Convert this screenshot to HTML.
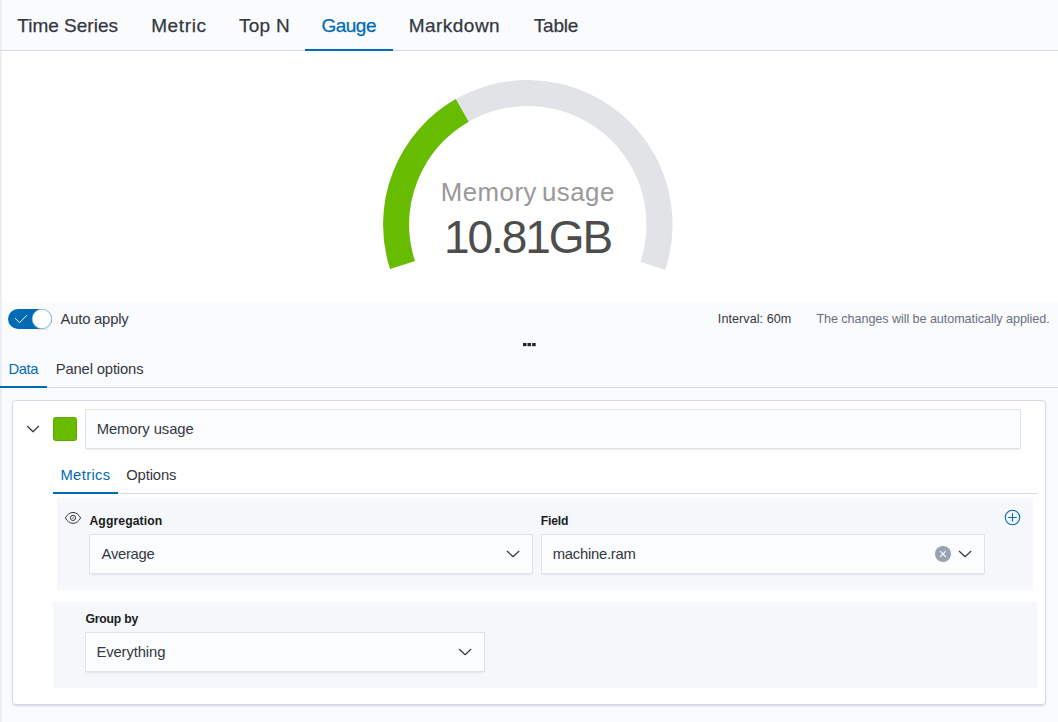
<!DOCTYPE html>
<html lang="en"><head><meta charset="utf-8"><title>Gauge</title>
<style>
html,body{margin:0;padding:0}
body{width:1058px;height:722px;position:relative;overflow:hidden;background:#fafbfd;font-family:"Liberation Sans",sans-serif;-webkit-font-smoothing:auto}
.abs{position:absolute}
.t{position:absolute;white-space:nowrap;line-height:1}
#lb{left:0;top:0;width:1px;height:722px;background:#e8ebf0;box-shadow:1px 0 0 rgba(200,207,222,.22)}
#tabline{left:0;top:50px;width:1058px;height:1px;background:#d3dae6}
#tabsel{left:305px;top:49px;width:88px;height:2px;background:#006bb4}
#viz{left:1px;top:51px;width:1057px;height:250px;background:#fff}
#sw{left:8px;top:309px;width:44px;height:20px;border-radius:10px;background:#006bb4}
#tab2line{left:1px;top:387px;width:1057px;height:1px;background:#d3dae6}
#tab2sel{left:0;top:386px;width:47px;height:2px;background:#006bb4}
#panel{left:12px;top:400px;width:1032px;height:303px;background:#fff;border:1px solid #d3dae6;border-radius:4px;box-shadow:0 2px 2px -1px rgba(152,162,179,.3),0 1px 5px -2px rgba(152,162,179,.3)}
#sq{left:53px;top:417px;width:22px;height:22px;background:#68bc00;border:1px solid #5ca700;border-radius:2.5px}
.inp{position:absolute;background:#fbfcfd;box-sizing:border-box;box-shadow:0 1px 1px -1px rgba(152,162,179,.2),0 3px 2px -2px rgba(152,162,179,.2),inset 0 0 0 1px rgba(35,38,55,.115)}
#in1{left:85px;top:409px;width:936px;height:40px}
#tab3line{left:53px;top:493px;width:984px;height:1px;background:#d3dae6}
#tab3sel{left:53px;top:492px;width:65px;height:2px;background:#006bb4}
#row1{left:57px;top:498px;width:976px;height:92px;background:#f5f7fa}
#row2{left:53px;top:602px;width:984px;height:86px;background:#f5f7fa}
#in2{left:89px;top:534px;width:444px;height:40px}
#in3{left:541px;top:534px;width:444px;height:40px}
#in4{left:85px;top:632px;width:400px;height:40px}
svg{position:absolute;left:0;top:0;overflow:visible}
#t1{left:17.25px;top:16px;font-size:19px;font-weight:400;color:#343741;letter-spacing:0.011px;-webkit-text-stroke:0.25px #343741}
#t2{left:151.17px;top:16px;font-size:19px;font-weight:400;color:#343741;letter-spacing:0.638px;-webkit-text-stroke:0.25px #343741}
#t3{left:239.02px;top:16px;font-size:19px;font-weight:400;color:#343741;letter-spacing:0.244px;-webkit-text-stroke:0.25px #343741}
#t4{left:321.59px;top:16px;font-size:19px;font-weight:400;color:#006bb4;letter-spacing:-0.542px;-webkit-text-stroke:0.25px #006bb4}
#t5{left:408.66px;top:16px;font-size:19px;font-weight:400;color:#343741;letter-spacing:0.483px;-webkit-text-stroke:0.25px #343741}
#t6{left:533.68px;top:16px;font-size:19px;font-weight:400;color:#343741;letter-spacing:-0.168px;-webkit-text-stroke:0.25px #343741}
#g1{left:440.71px;top:180px;font-size:25.8px;font-weight:400;color:#999999;letter-spacing:0.502px;word-spacing:-2.6px}
#g2{left:444.00px;top:214px;font-size:46px;font-weight:400;color:#4d4d4d;letter-spacing:-2.054px}
#a1{left:60.58px;top:312px;font-size:14.8px;font-weight:400;color:#343741;letter-spacing:-0.207px}
#i1{left:717.83px;top:313px;font-size:12.6px;font-weight:400;color:#343741;letter-spacing:0.061px}
#i2{left:816.38px;top:313px;font-size:12.6px;font-weight:400;color:#69707d;letter-spacing:-0.063px}
#d1{left:8.54px;top:362px;font-size:14.8px;font-weight:400;color:#006bb4;letter-spacing:-0.445px}
#d2{left:55.77px;top:362px;font-size:14.8px;font-weight:400;color:#343741;letter-spacing:-0.159px}
#m1{left:96.65px;top:422px;font-size:14.8px;font-weight:400;color:#343741;letter-spacing:-0.075px}
#m2{left:60.45px;top:468px;font-size:14.8px;font-weight:400;color:#006bb4;letter-spacing:0.344px}
#m3{left:126.15px;top:468px;font-size:14.8px;font-weight:400;color:#343741;letter-spacing:-0.103px}
#l1{left:89.47px;top:515px;font-size:12.2px;font-weight:700;color:#1a1c21;letter-spacing:0.089px}
#l2{left:540.82px;top:515px;font-size:12.2px;font-weight:700;color:#1a1c21;letter-spacing:-0.225px}
#s1{left:101.62px;top:547px;font-size:14.8px;font-weight:400;color:#343741;letter-spacing:-0.307px}
#s2{left:552.78px;top:547px;font-size:14.8px;font-weight:400;color:#343741;letter-spacing:-0.257px}
#l3{left:85.38px;top:613px;font-size:12.2px;font-weight:700;color:#1a1c21;letter-spacing:-0.173px}
#s3{left:96.45px;top:645px;font-size:14.8px;font-weight:400;color:#343741;letter-spacing:-0.107px}
</style></head>
<body>
<div class="abs" id="viz"></div>
<div class="abs" id="lb"></div>
<div class="abs" id="tabline"></div>
<div class="abs" id="tabsel"></div>
<span class="t" id="t1">Time Series</span>
<span class="t" id="t2">Metric</span>
<span class="t" id="t3">Top N</span>
<span class="t" id="t4">Gauge</span>
<span class="t" id="t5">Markdown</span>
<span class="t" id="t6">Table</span>
<svg width="1058" height="722" viewBox="0 0 1058 722">
<path d="M402.52 265.06A131.65 131.65 0 1 1 652.79 265.94" fill="none" stroke="#e2e3e7" stroke-width="26.1"/>
<path d="M402.52 265.06A131.65 131.65 0 0 1 462.23 110.44" fill="none" stroke="#68bc00" stroke-width="26.1"/>
</svg>
<span class="t" id="g1">Memory usage</span>
<span class="t" id="g2">10.81GB</span>
<div class="abs" id="sw"></div>
<span class="t" id="a1">Auto apply</span>
<span class="t" id="i1">Interval: 60m</span>
<span class="t" id="i2">The changes will be automatically applied.</span>
<div class="abs" id="tab2line"></div>
<div class="abs" id="tab2sel"></div>
<span class="t" id="d1">Data</span>
<span class="t" id="d2">Panel options</span>
<div class="abs" id="panel"></div>
<div class="abs" id="sq"></div>
<div class="inp" id="in1"></div>
<span class="t" id="m1">Memory usage</span>
<div class="abs" id="tab3line"></div>
<div class="abs" id="tab3sel"></div>
<span class="t" id="m2">Metrics</span>
<span class="t" id="m3">Options</span>
<div class="abs" id="row1"></div>
<div class="abs" id="row2"></div>
<div class="inp" id="in2"></div>
<div class="inp" id="in3"></div>
<div class="inp" id="in4"></div>
<span class="t" id="l1">Aggregation</span>
<span class="t" id="l2">Field</span>
<span class="t" id="s1">Average</span>
<span class="t" id="s2">machine.ram</span>
<span class="t" id="l3">Group by</span>
<span class="t" id="s3">Everything</span>
<svg width="1058" height="722" viewBox="0 0 1058 722" fill="none">
<!-- switch check -->
<ellipse cx="42.3" cy="329.2" rx="6" ry="1.1" fill="#98a2b3" opacity=".25"/>
<circle cx="41.9" cy="318.9" r="9.65" fill="#fff" stroke="#a9c1d8" stroke-width=".6"/>
<path d="M15 318.1L19.5 322.7L27 315.1" stroke="#fff" stroke-width="0.95"/>
<!-- dots -->
<rect x="523" y="343" width="3.5" height="3.2" fill="#22252d"/><rect x="527.5" y="343" width="3.5" height="3.2" fill="#22252d"/><rect x="532.1" y="343" width="3.6" height="3.2" fill="#22252d"/>
<!-- chevrons -->
<path d="M27.4 426.3L33 431.8L38.6 426.3" stroke="#343741" stroke-width="1.2" stroke-linecap="round" stroke-linejoin="round"/>
<path d="M507.3 551.3L513.1 556.7L518.9 551.3" stroke="#343741" stroke-width="1.2" stroke-linecap="round" stroke-linejoin="round"/>
<path d="M959.3 551.3L965.1 556.7L970.9 551.3" stroke="#343741" stroke-width="1.2" stroke-linecap="round" stroke-linejoin="round"/>
<path d="M459.3 649.3L465.1 654.7L470.9 649.3" stroke="#343741" stroke-width="1.2" stroke-linecap="round" stroke-linejoin="round"/>
<!-- clear -->
<circle cx="943" cy="554" r="8" fill="#98a2b3"/>
<path d="M940.2 551.2L945.8 556.8M945.8 551.2L940.2 556.8" stroke="#fff" stroke-width="1.2"/>
<!-- plus -->
<circle cx="1012.5" cy="517.5" r="7.2" stroke="#006bb4" stroke-width="1.1"/>
<path d="M1012.5 513.2V521.8M1008.2 517.5H1016.8" stroke="#006bb4" stroke-width="1.1"/>
<!-- eye -->
<path d="M65.4 517.9C66.9 514.9 69.7 512.45 73 512.45C76.3 512.45 79.1 514.9 80.6 517.9C79.1 520.9 76.3 523.35 73 523.35C69.7 523.35 66.9 520.9 65.4 517.9Z" stroke="#343741" stroke-width="1" stroke-linejoin="round"/>
<circle cx="73" cy="517.9" r="2.6" stroke="#343741" stroke-width="1"/>
<rect x="72.3" y="517.2" width="1.4" height="1.4" fill="#666b77"/>
</svg>
</body></html>
